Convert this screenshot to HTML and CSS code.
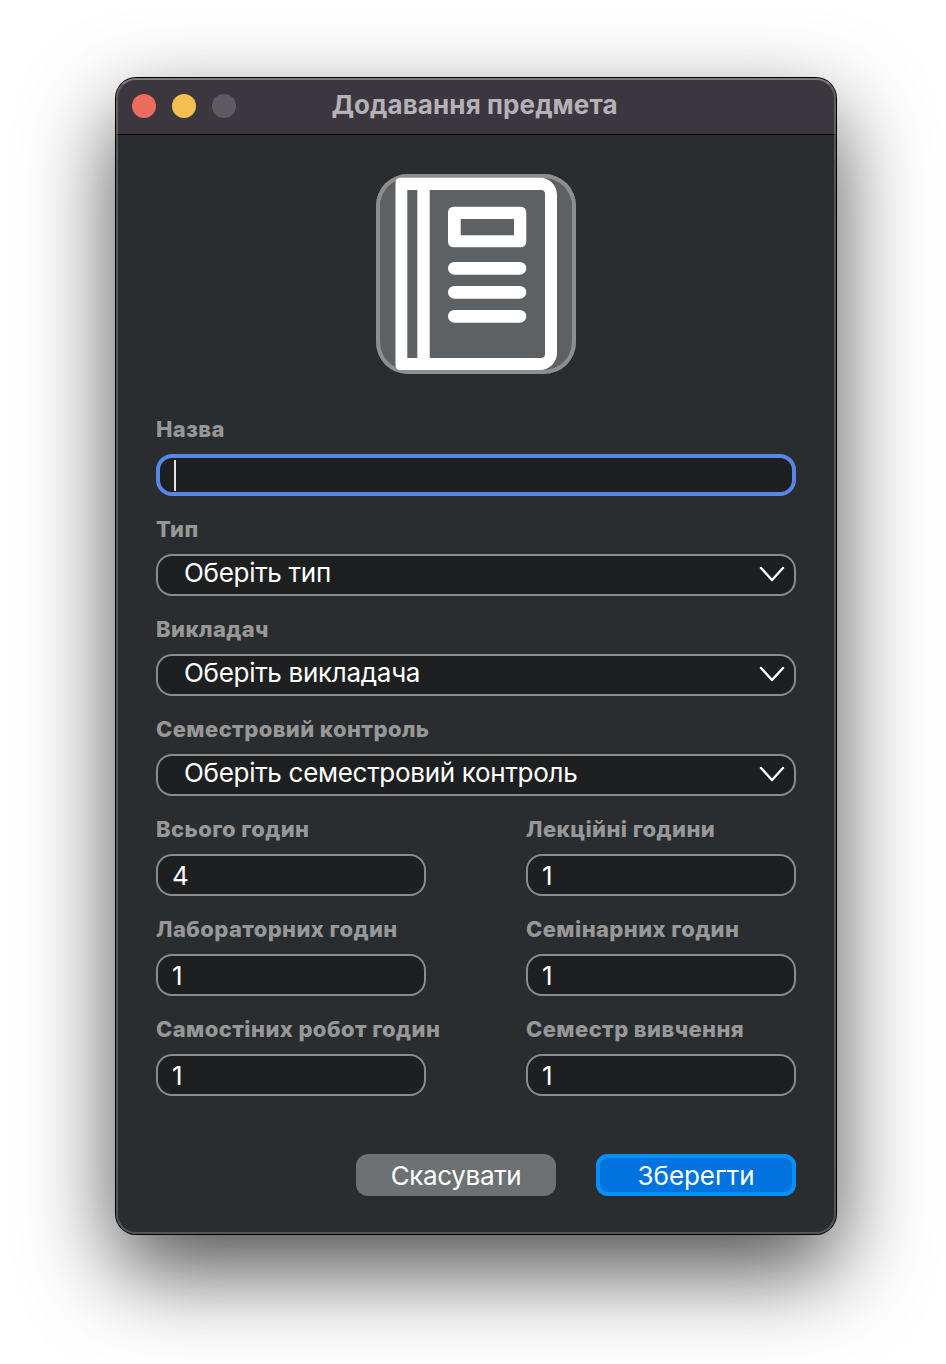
FILE: index.html
```html
<!DOCTYPE html>
<html lang="uk">
<head>
<meta charset="utf-8">
<title>Додавання предмета</title>
<link rel="stylesheet" href="styles.css">
</head>
<body>
<main class="window">
  <header class="titlebar">
    <div class="lights"><span class="light red"></span><span class="light yellow"></span><span class="light gray"></span></div>
    <h1 class="title">Додавання предмета</h1>
  </header>
  <form class="content">
    <div class="icon">
      <svg width="200" height="200" viewBox="0 0 200 200" fill="#fff" fill-rule="evenodd">
        <path d="M24.500 3.700H164A17 17 0 0 1 181 20.700V179A17 17 0 0 1 164 196H24.500Q19.500 196 19.500 191V8.700Q19.500 3.700 24.500 3.700ZM31.300 16V184H41.300V16ZM53.700 16V184H165Q169 184 169 180V20Q169 16 165 16Z"/>
        <path d="M78 32.700H144.300Q150.300 32.700 150.300 38.700V67.300Q150.300 73.300 144.300 73.300H78Q72 73.300 72 67.300V38.700Q72 32.700 78 32.700ZM84.700 45V61.300H138V45Z"/>
        <rect x="72" y="88" width="78.300" height="12.700" rx="6.350"/>
        <rect x="72" y="112" width="78.300" height="12.700" rx="6.350"/>
        <rect x="72" y="136" width="78.300" height="12.700" rx="6.350"/>
      </svg>
    </div>
    <div class="fields">
      <div class="field wide"><span class="label">Назва</span><div class="box focused"><span class="caret"></span></div></div>
      <div class="field wide"><span class="label">Тип</span><div class="box select"><span class="value">Оберіть тип</span><svg class="chevron" width="26" height="16" viewBox="0 0 26 16"><path d="M2 2L13 14L24 2"/></svg></div></div>
      <div class="field wide"><span class="label">Викладач</span><div class="box select"><span class="value">Оберіть викладача</span><svg class="chevron" width="26" height="16" viewBox="0 0 26 16"><path d="M2 2L13 14L24 2"/></svg></div></div>
      <div class="field wide"><span class="label">Семестровий контроль</span><div class="box select"><span class="value">Оберіть семестровий контроль</span><svg class="chevron" width="26" height="16" viewBox="0 0 26 16"><path d="M2 2L13 14L24 2"/></svg></div></div>
      <div class="field"><span class="label">Всього годин</span><div class="box">4</div></div>
      <div class="field"><span class="label">Лекційні години</span><div class="box">1</div></div>
      <div class="field"><span class="label">Лабораторних годин</span><div class="box">1</div></div>
      <div class="field"><span class="label">Семінарних годин</span><div class="box">1</div></div>
      <div class="field"><span class="label">Самостіних робот годин</span><div class="box">1</div></div>
      <div class="field"><span class="label">Семестр вивчення</span><div class="box">1</div></div>
    </div>
    <div class="actions">
      <button type="button" class="btn cancel">Скасувати</button>
      <button type="button" class="btn save">Зберегти</button>
    </div>
  </form>
</main>
</body>
</html>
```
FILE: styles.css
```css
* { box-sizing: border-box; }
html { background: #fff; }
body {
  margin: 0;
  height: 1364px;
  padding: 78px 110px 0 116px;
  overflow: hidden;
  font-family: Inter, "Liberation Sans", sans-serif;
  color: #fff;
}
.window {
  position: relative;
  width: 720px;
  height: 1156px;
  border-radius: 20px;
  background: #2a2d30;
  box-shadow: 0 0 0 1px #000, 0 36px 90px rgba(0, 0, 0, .7);
}
/* light rim drawn over the title bar and the content */
.window::after {
  content: "";
  position: absolute;
  inset: 0;
  border: 2px solid rgba(255, 255, 255, .2);
  border-top-color: rgba(255, 255, 255, .34);
  border-radius: 20px;
  pointer-events: none;
}
.titlebar {
  display: grid;
  grid-template-columns: 120px 1fr 120px;
  align-items: center;
  height: 57px;
  border-bottom: 1px solid #000;
  border-radius: 20px 20px 0 0;
  background: #3c373e;
}
.lights { display: flex; gap: 16px; padding-left: 16px; }
.light { width: 24px; height: 24px; border-radius: 50%; }
.red { background: #ed6a5e; }
.yellow { background: #f5bf4f; }
.gray { background: #5e5a61; }
.title {
  margin: 0;
  padding: 0 3px 2px 0;
  text-align: center;
  white-space: nowrap;
  font-size: 26px;
  line-height: 32px;
  font-weight: 700;
  letter-spacing: .1px;
  color: #b5b1b8;
}
.content { padding: 39px 40px 0; }
.icon {
  width: 200px;
  height: 200px;
  margin: 0 auto;
  border-radius: 32px;
  background: #5d6163;
  box-shadow: inset 0 0 0 4px #8e8e8f;
}
.icon svg { display: block; }
.fields {
  display: grid;
  grid-template-columns: 270px 270px;
  column-gap: 100px;
  grid-auto-rows: 100px;
  padding-top: 40px;
}
.wide { grid-column: 1 / -1; }
.label {
  display: block;
  height: 40px;
  line-height: 30px;
  white-space: nowrap;
  font-size: 22px;
  font-weight: 800;
  letter-spacing: .4px;
  color: #979797;
}
.box {
  display: flex;
  align-items: center;
  height: 42px;
  padding: 2px 14px 0;
  border: 2px solid #8b8b8d;
  border-radius: 16px;
  background: #1e1f21;
  font-size: 26px;
  line-height: 32px;
}
.focused { padding: 0 14px; border: 4px solid #5587e9; }
.caret { width: 2px; height: 31px; background: #e8e2dd; }
.select {
  justify-content: space-between;
  padding: 0 9px 2px 26px;
  letter-spacing: -.3px;
}
.value { padding-bottom: 2px; }
.chevron {
  fill: none;
  stroke: #fff;
  stroke-width: 2.400;
  stroke-linecap: round;
  stroke-linejoin: round;
}
.actions { display: flex; justify-content: flex-end; gap: 40px; padding-top: 40px; }
.btn {
  width: 200px;
  height: 42px;
  padding: 2px 0 0;
  border: 0;
  border-radius: 12px;
  font: 400 26px/32px Inter, "Liberation Sans", sans-serif;
  color: #fff;
}
.cancel { background: #6e7173; letter-spacing: -.35px; }
.save { background: #0073e0; box-shadow: inset 0 0 0 4px #0691f8; letter-spacing: -.05px; }
```
